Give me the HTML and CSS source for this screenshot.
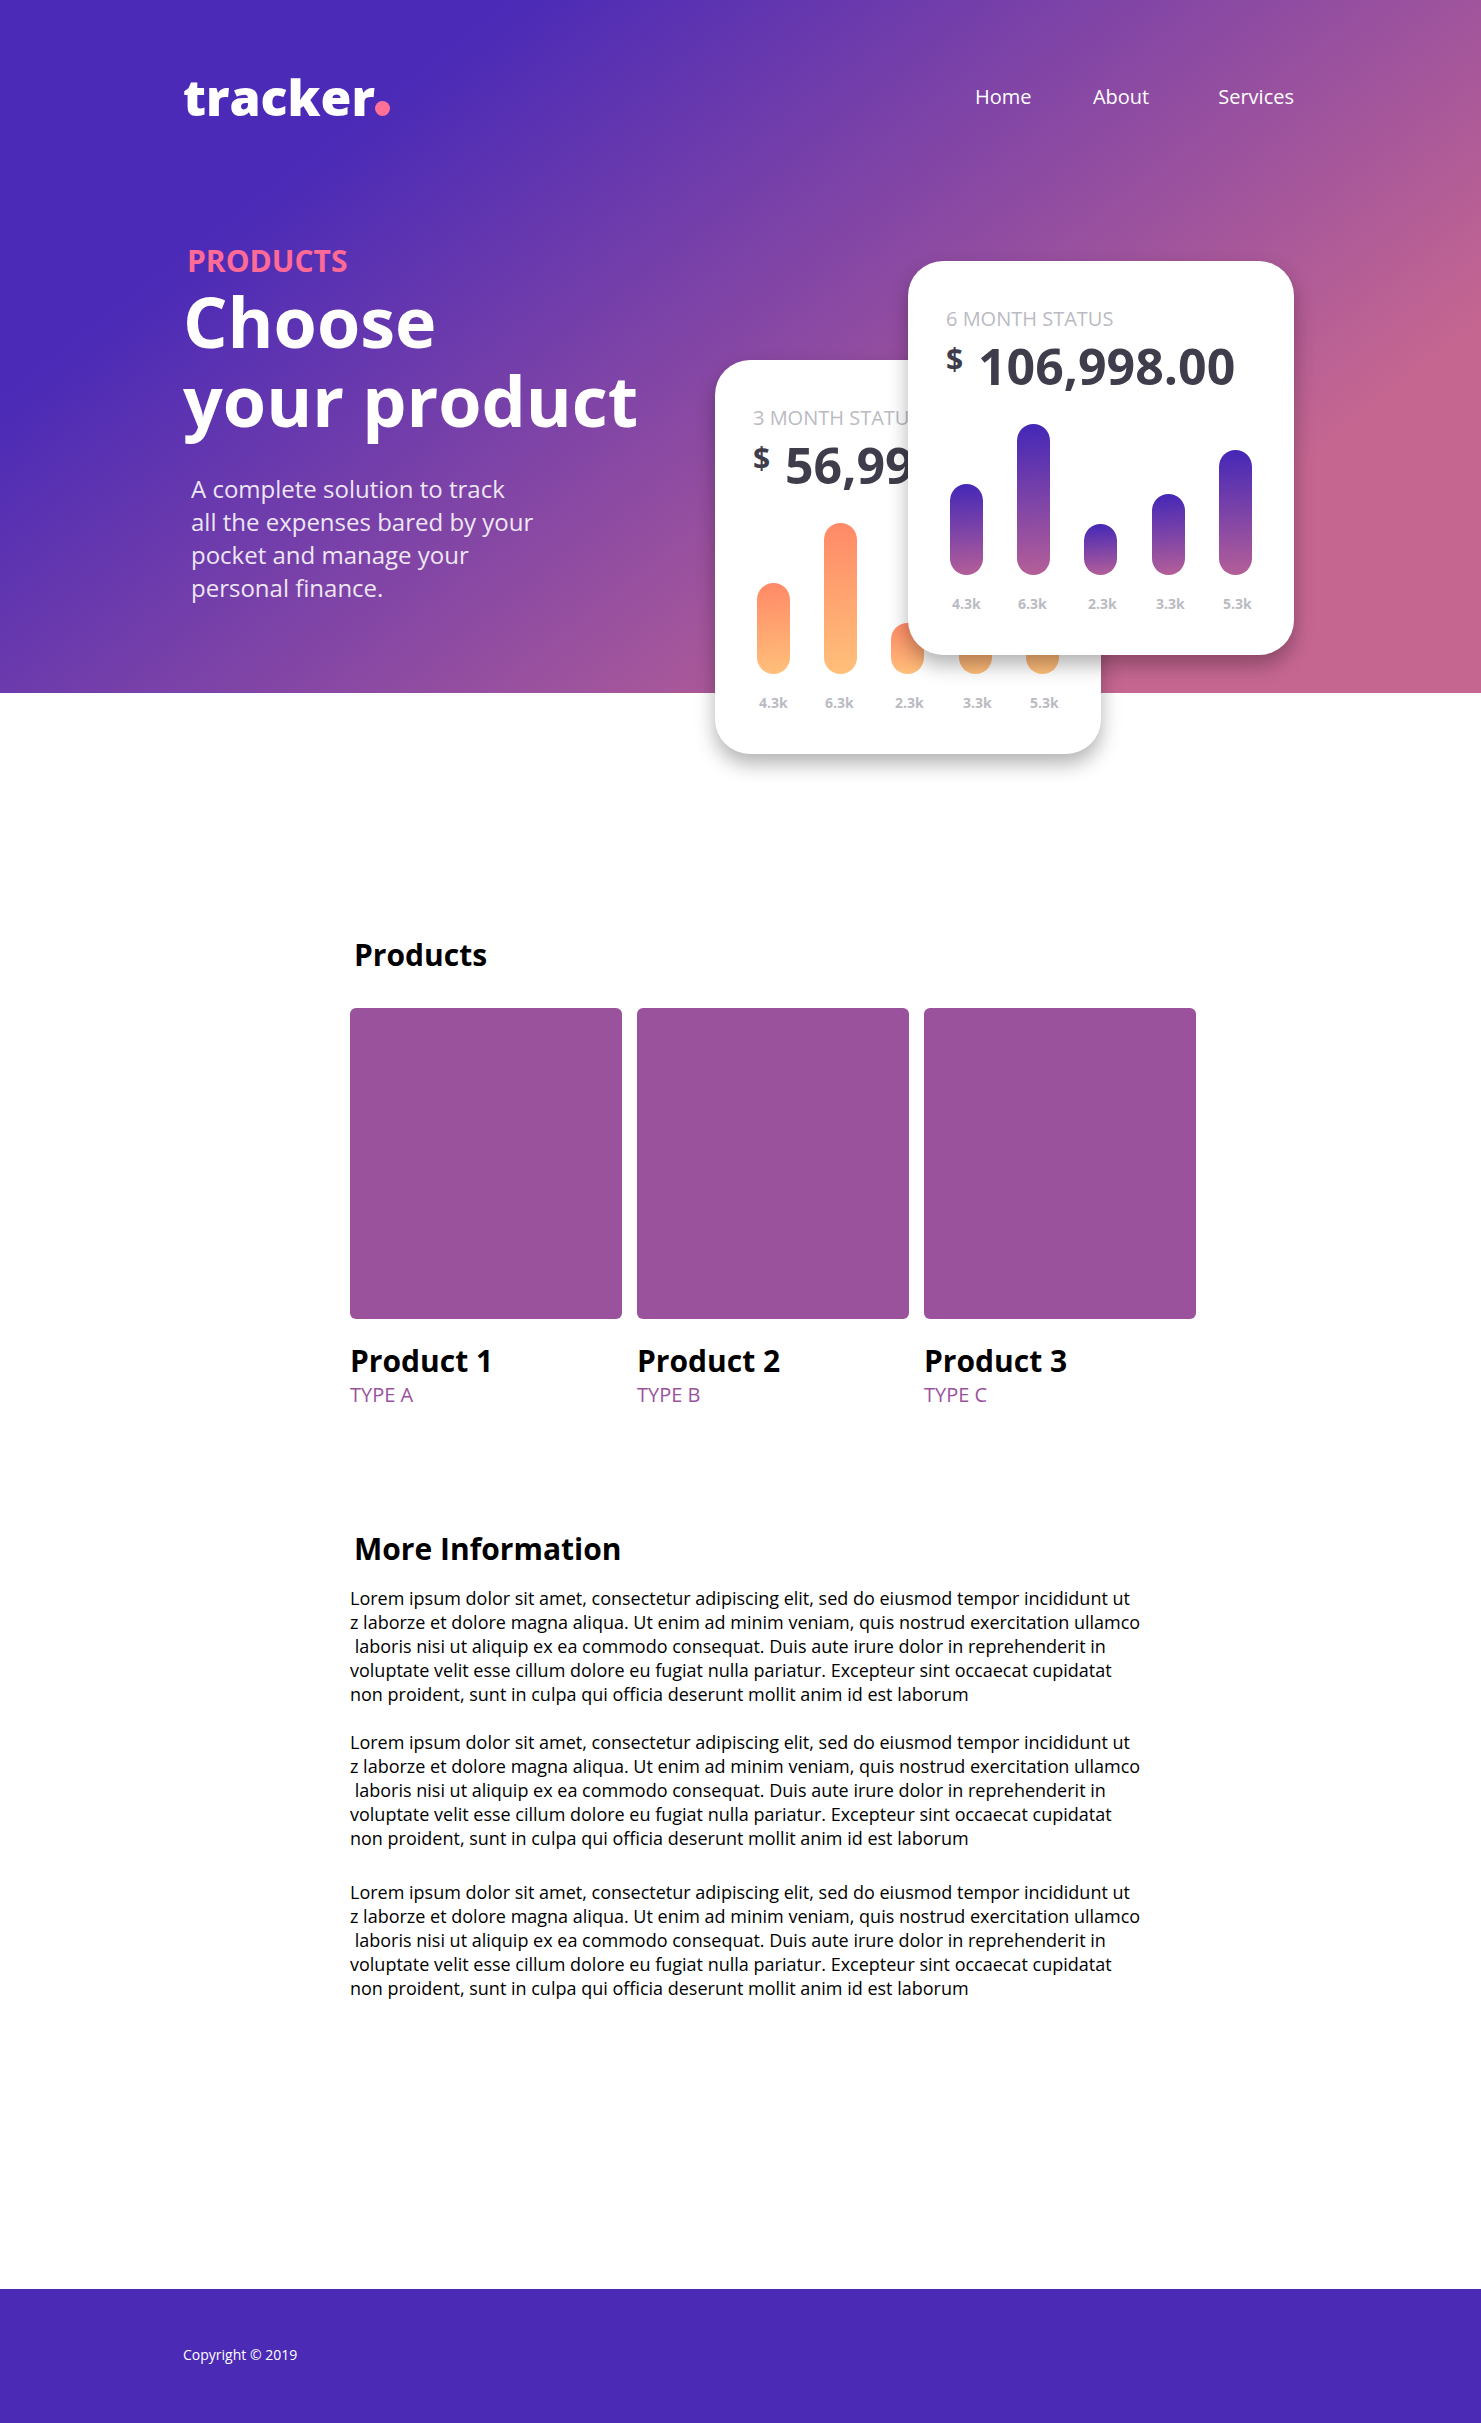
FILE: index.html
```html
<!DOCTYPE html>
<html lang="en">
<head>
<meta charset="utf-8">
<title>tracker.</title>
<link rel="stylesheet" href="styles.css">
</head>
<body>
<header class="hero">
  <div class="topbar">
    <a class="logo">tracker<span class="logo-dot"></span></a>
    <nav class="nav"><a>Home</a><a>About</a><a>Services</a></nav>
  </div>
  <div class="intro">
    <p class="eyebrow">PRODUCTS</p>
    <h1 class="title">Choose<br>your product</h1>
    <p class="lead">A complete solution to track<br>all the expenses bared by your<br>pocket and manage your<br>personal finance.</p>
  </div>
  <section class="card card-orange">
    <h2 class="card-label">3 MONTH STATUS</h2>
    <p class="amount"><span class="currency">$</span>56,998.00</p>
    <div class="bars">
      <i class="bar" style="height:91px"></i><i class="bar" style="height:151px"></i><i class="bar" style="height:51px"></i><i class="bar" style="height:81px"></i><i class="bar" style="height:125px"></i>
    </div>
    <div class="values"><span>4.3k</span><span>6.3k</span><span>2.3k</span><span>3.3k</span><span>5.3k</span></div>
  </section>
  <section class="card card-purple">
    <h2 class="card-label">6 MONTH STATUS</h2>
    <p class="amount"><span class="currency">$</span>106,998.00</p>
    <div class="bars">
      <i class="bar" style="height:91px"></i><i class="bar" style="height:151px"></i><i class="bar" style="height:51px"></i><i class="bar" style="height:81px"></i><i class="bar" style="height:125px"></i>
    </div>
    <div class="values"><span>4.3k</span><span>6.3k</span><span>2.3k</span><span>3.3k</span><span>5.3k</span></div>
  </section>
</header>
<main class="content">
  <h2 class="section-title">Products</h2>
  <div class="products">
    <article><div class="thumb"></div><h3 class="name">Product 1</h3><p class="type">TYPE A</p></article>
    <article><div class="thumb"></div><h3 class="name">Product 2</h3><p class="type">TYPE B</p></article>
    <article><div class="thumb"></div><h3 class="name">Product 3</h3><p class="type">TYPE C</p></article>
  </div>
  <h2 class="section-title info-title">More Information</h2>
  <div class="info">
<p class="para">Lorem ipsum dolor sit amet, consectetur adipiscing elit, sed do eiusmod tempor incididunt ut
z laborze et dolore magna aliqua. Ut enim ad minim veniam, quis nostrud exercitation ullamco
 laboris nisi ut aliquip ex ea commodo consequat. Duis aute irure dolor in reprehenderit in
voluptate velit esse cillum dolore eu fugiat nulla pariatur. Excepteur sint occaecat cupidatat
non proident, sunt in culpa qui officia deserunt mollit anim id est laborum</p>
<p class="para">Lorem ipsum dolor sit amet, consectetur adipiscing elit, sed do eiusmod tempor incididunt ut
z laborze et dolore magna aliqua. Ut enim ad minim veniam, quis nostrud exercitation ullamco
 laboris nisi ut aliquip ex ea commodo consequat. Duis aute irure dolor in reprehenderit in
voluptate velit esse cillum dolore eu fugiat nulla pariatur. Excepteur sint occaecat cupidatat
non proident, sunt in culpa qui officia deserunt mollit anim id est laborum</p>
<p class="para">Lorem ipsum dolor sit amet, consectetur adipiscing elit, sed do eiusmod tempor incididunt ut
z laborze et dolore magna aliqua. Ut enim ad minim veniam, quis nostrud exercitation ullamco
 laboris nisi ut aliquip ex ea commodo consequat. Duis aute irure dolor in reprehenderit in
voluptate velit esse cillum dolore eu fugiat nulla pariatur. Excepteur sint occaecat cupidatat
non proident, sunt in culpa qui officia deserunt mollit anim id est laborum</p>
  </div>
</main>
<footer class="footer">Copyright © 2019</footer>
</body>
</html>
```
FILE: styles.css
```css
* { box-sizing: border-box; margin: 0; padding: 0; }
body { width: 1481px; height: 2423px; display: flex; flex-direction: column; background: #fff; color: #000; font-family: "Open Sans", sans-serif; }
.hero { position: relative; height: 693px; flex: none; background: linear-gradient(142deg, #4a2ab7 21.5%, #c56691 80%); }
.topbar { display: flex; justify-content: space-between; padding: 63px 187px 0 183px; }
.logo { display: flex; color: #fff; font-size: 50px; font-weight: 800; line-height: 68px; }
.logo-dot { width: 15px; height: 15px; margin: 38px 0 0 0; border-radius: 50%; background: #ff7197; }
.nav { display: flex; color: #fff; font-size: 20px; line-height: 27px; padding-top: 20px; }
.nav a:nth-child(2) { margin-left: 61.5px; }
.nav a:nth-child(3) { margin-left: 69px; }
.intro { padding: 109px 0 0 183px; }
.eyebrow { padding-left: 4px; margin-bottom: 1px; color: #ff6a96; font-size: 30px; font-weight: 700; line-height: 41px; }
.title { color: #fff; font-size: 70px; font-weight: 700; line-height: 79px; }
.lead { padding: 32px 0 0 8px; color: #fff; opacity: .87; font-size: 24px; line-height: 33px; }
.card { position: absolute; width: 386px; height: 394px; padding: 43px 0 0 38px; border-radius: 35px; background: #fff; box-shadow: 0 10px 20px rgba(0,0,0,.3); }
.card-orange { left: 715px; top: 360px; }
.card-purple { left: 908px; top: 261px; }
.card-label { color: #babbc2; font-size: 20px; font-weight: 400; line-height: 30px; }
.amount { display: flex; margin-top: -2px; color: #3f3d4b; font-size: 50px; font-weight: 700; line-height: 68px; }
.currency { width: 32px; font-size: 30px; line-height: 53px; font-weight: 700; }
.bars { display: flex; align-items: flex-end; gap: 34px; width: 302px; height: 151px; margin: 24px 0 0 4px; }
.bar { width: 33px; border-radius: 17px; }
.bar:nth-child(4) { margin-left: 1px; }
.card-orange .bar { background: linear-gradient(176deg, #ff8967, #ffc07a); }
.card-purple .bar { background: linear-gradient(176deg, #4327b7, #b55f98); }
.values { display: flex; margin: 19px 0 0 6px; color: #babbc2; font-size: 14px; font-weight: 700; line-height: 19px; }
.values span { width: 67px; }
.values span:nth-child(1) { width: 66px; }
.values span:nth-child(2) { width: 70px; }
.values span:nth-child(3) { width: 68px; }
.content { flex: 1; padding: 241px 0 0 350px; }
.section-title { padding-left: 4px; font-size: 30px; font-weight: 700; line-height: 41px; }
.products { display: grid; grid-template-columns: repeat(3, 272px); gap: 15px; padding-top: 33px; }
.thumb { height: 311px; border-radius: 6px; background: #9b529d; }
.name { margin-top: 21px; font-size: 30px; font-weight: 700; line-height: 41px; }
.type { color: #9b529d; font-size: 20px; font-weight: 400; line-height: 27px; }
.info-title { margin-top: 120px; }
.info { padding-top: 17px; }
.para { margin-bottom: 24px; font-size: 18px; line-height: 24px; white-space: pre; }
.para:nth-child(2) { margin-bottom: 30px; }
.footer { flex: none; height: 134px; padding: 56px 0 0 183px; background: #4b2ab6; color: #fff; font-size: 14px; line-height: 19px; }
```
